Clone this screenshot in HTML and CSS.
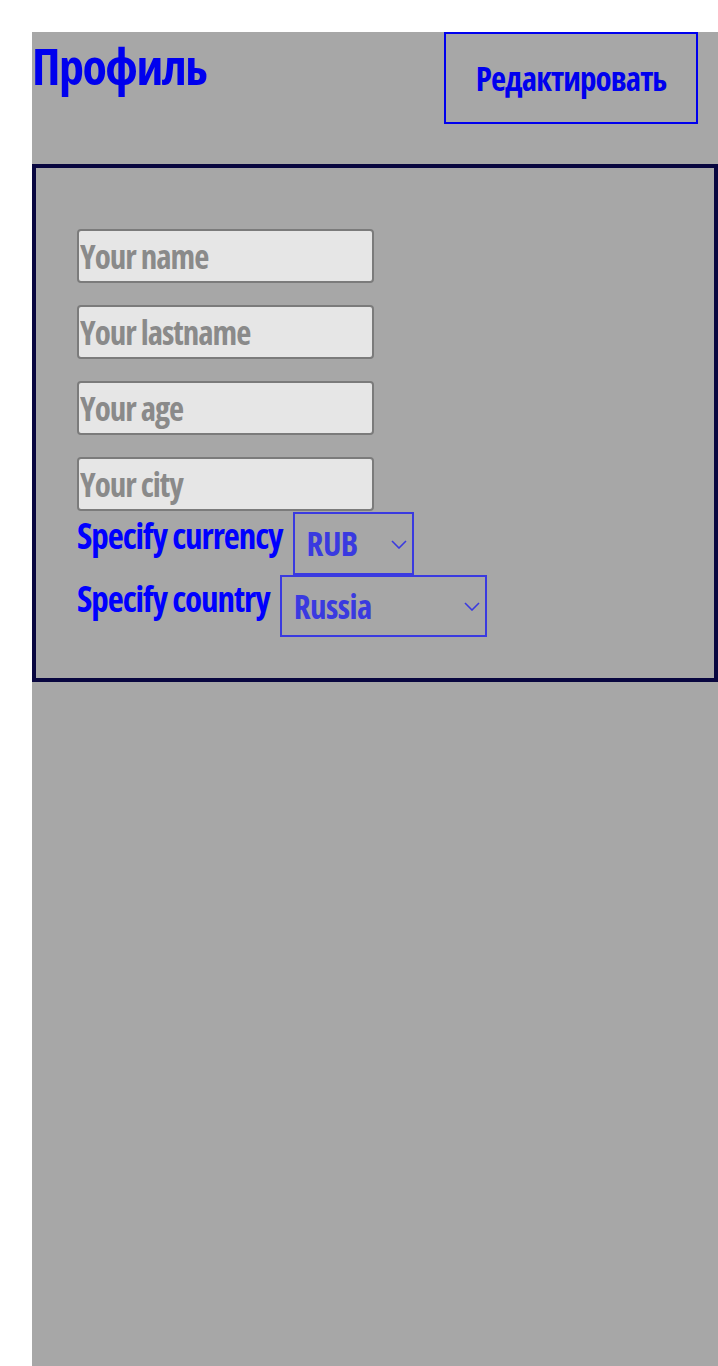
FILE: index.html
```html
<!DOCTYPE html>
<html lang="ru">
<head>
<meta charset="utf-8">
<title>Профиль</title>
<link rel="stylesheet" href="styles.css">
</head>
<body>
<div class="page">
  <div class="app">
    <header class="header">
      <h1 class="title">Профиль</h1>
      <button class="edit-btn" type="button">Редактировать</button>
    </header>
    <form class="profile-form">
      <input class="field" type="text" placeholder="Your name">
      <input class="field" type="text" placeholder="Your lastname">
      <input class="field" type="text" placeholder="Your age">
      <input class="field field-last" type="text" placeholder="Your city">
      <div class="row">
        <label class="row-label" for="currency">Specify currency</label>
        <div class="select-wrap">
          <select class="picker picker-currency" id="currency">
            <option>RUB</option>
            <option>USD</option>
            <option>EUR</option>
          </select>
          <svg class="chevron" width="16" height="9" viewBox="0 0 16 9" aria-hidden="true"><path d="M1 1 L8 8 L15 1" fill="none" stroke="#3a3ae0" stroke-width="1.6"/></svg>
        </div>
      </div>
      <div class="row">
        <label class="row-label" for="country">Specify country</label>
        <div class="select-wrap">
          <select class="picker picker-country" id="country">
            <option>Russia</option>
            <option>Belarus</option>
            <option>Kazakhstan</option>
          </select>
          <svg class="chevron" width="16" height="9" viewBox="0 0 16 9" aria-hidden="true"><path d="M1 1 L8 8 L15 1" fill="none" stroke="#3a3ae0" stroke-width="1.6"/></svg>
        </div>
      </div>
    </form>
  </div>
</div>
</body>
</html>
```
FILE: styles.css
```css
html, body {
  margin: 0;
  padding: 0;
  background: #ffffff;
}
.page {
  padding: 32px 0 0 32px;
  font-family: "Open Sans", "Roboto Condensed", sans-serif;
  font-stretch: 75%;
  font-weight: 700;
}
.app {
  background: #a7a7a7;
  width: 686px;
  min-height: 1334px;
}
.header {
  display: flex;
  justify-content: space-between;
  align-items: flex-start;
  height: 132px;
  box-sizing: border-box;
}
.title {
  margin: 9px 0 0;
  font-size: 50px;
  line-height: 1;
  letter-spacing: -1.5px;
  color: #0000ee;
  font-weight: 700;
}
.edit-btn {
  width: 254px;
  height: 92px;
  margin-right: 20px;
  border: 2px solid #0000ee;
  background: transparent;
  color: #0000ee;
  font-family: inherit;
  font-stretch: 75%;
  font-weight: 700;
  font-size: 33px;
  letter-spacing: -0.9px;
  padding: 0;
}
.profile-form {
  border: 4px solid #08063f;
  padding: 39px 41px 41px 41px;
  display: flex;
  flex-direction: column;
  align-items: flex-start;
}
.field {
  box-sizing: border-box;
  width: 297px;
  height: 54px;
  margin: 22px 0 0;
  padding: 1px 2px 1px 1px;
  border: 2px solid #7b7b7b;
  border-radius: 4px;
  background: #e6e6e6;
  font-family: inherit;
  font-stretch: 75%;
  font-weight: 700;
  font-size: 33px;
  letter-spacing: -1px;
  color: #333;
}
.field::placeholder {
  color: #8a8a8a;
}
.field-last {
  margin-bottom: 1px;
}
.row {
  display: flex;
  align-items: flex-start;
  gap: 10px;
}
.row-label {
  color: #0000ff;
  font-size: 35px;
  line-height: 48px;
  letter-spacing: -1.05px;
}
.select-wrap {
  position: relative;
  display: flex;
}
.picker {
  box-sizing: border-box;
  -webkit-appearance: none;
  appearance: none;
  height: 63px;
  border: 2px solid #3a3ae0;
  border-radius: 0;
  background-color: transparent;
  color: #3a3ae0;
  font-family: inherit;
  font-stretch: 75%;
  font-weight: 700;
  font-size: 33px;
  letter-spacing: -0.6px;
  padding: 0 28px 0 12px;
  margin: 0;
}
.picker-currency { width: 121px; }
.picker-country { width: 207px; height: 62px; }
.chevron {
  position: absolute;
  right: 7px;
  top: 50%;
  margin-top: -4px;
  pointer-events: none;
}
```
